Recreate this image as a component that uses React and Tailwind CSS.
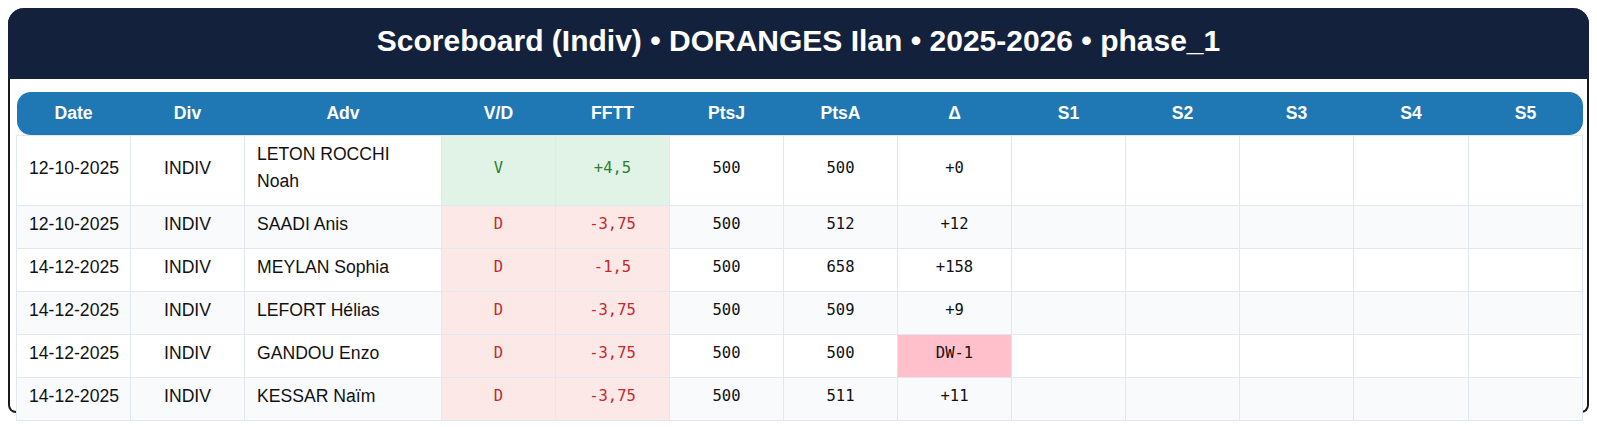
import React from 'react'

const rows = [
  { date: '12-10-2025', div: 'INDIV', adv: 'LETON ROCCHI Noah', vd: 'V', fftt: '+4,5', ptsJ: '500', ptsA: '500', delta: '+0' },
  { date: '12-10-2025', div: 'INDIV', adv: 'SAADI Anis', vd: 'D', fftt: '-3,75', ptsJ: '500', ptsA: '512', delta: '+12' },
  { date: '14-12-2025', div: 'INDIV', adv: 'MEYLAN Sophia', vd: 'D', fftt: '-1,5', ptsJ: '500', ptsA: '658', delta: '+158' },
  { date: '14-12-2025', div: 'INDIV', adv: 'LEFORT Hélias', vd: 'D', fftt: '-3,75', ptsJ: '500', ptsA: '509', delta: '+9' },
  { date: '14-12-2025', div: 'INDIV', adv: 'GANDOU Enzo', vd: 'D', fftt: '-3,75', ptsJ: '500', ptsA: '500', delta: 'DW-1' },
  { date: '14-12-2025', div: 'INDIV', adv: 'KESSAR Naïm', vd: 'D', fftt: '-3,75', ptsJ: '500', ptsA: '511', delta: '+11' },
]

const headers = ['Date', 'Div', 'Adv', 'V/D', 'FFTT', 'PtsJ', 'PtsA', 'Δ', 'S1', 'S2', 'S3', 'S4', 'S5']

function Scoreboard() {
  const cell = 'border border-[#e2e8f0] px-3 pt-[5.5px] pb-[9.5px] leading-[27px]'
  const mono = 'font-["DejaVu_Sans_Mono",monospace] text-[15.5px]'

  return (
    <div className='min-h-screen bg-white font-["Liberation_Sans",Arial,sans-serif] text-[17.6px] text-[#111]'>
      <div className="mx-2 mt-2 h-[405px] rounded-t-[16px] rounded-b-[8px] border-x-2 border-b-2 border-[#1a1a1a]">
        {/* Title bar */}
        <div className="-mx-[2px] flex h-[71px] items-center justify-center rounded-t-[16px] bg-[#14213d] pb-[6px]">
          <h1 className="text-[30px] font-bold text-white">
            Scoreboard (Indiv) • DORANGES Ilan • 2025-2026 • phase_1
          </h1>
        </div>

        {/* Table */}
        <div className="px-[6px] pt-[13px]">
          <table className="w-[1566px] table-fixed border-collapse">
            <colgroup>
              <col className="w-[114px]" />
              <col className="w-[114px]" />
              <col className="w-[197px]" />
              <col className="w-[114px]" />
              <col className="w-[114px]" />
              <col className="w-[114px]" />
              <col className="w-[114px]" />
              <col className="w-[114px]" />
              <col className="w-[114px]" />
              <col className="w-[114px]" />
              <col className="w-[114px]" />
              <col className="w-[115px]" />
              <col className="w-[114px]" />
            </colgroup>
            <thead>
              <tr className="bg-[#1f77b4] text-white">
                {headers.map((h, i) => (
                  <th
                    key={h}
                    className={
                      'h-[43px] p-0 text-center font-bold ' +
                      (i === 0 ? 'rounded-l-[14px] ' : '') +
                      (i === headers.length - 1 ? 'rounded-r-[14px]' : '')
                    }
                  >
                    {h}
                  </th>
                ))}
              </tr>
            </thead>
            <tbody>
              {rows.map((r, idx) => {
                const win = r.vd === 'V'
                const result = win ? 'bg-[#e1f3e6] text-[#2e7d32]' : 'bg-[#fde8e8] text-[#c62828]'
                return (
                  <tr key={idx} className={idx % 2 === 1 ? 'bg-[#f8fafc]' : 'bg-white'}>
                    <td className={cell + ' whitespace-nowrap text-left'}>{r.date}</td>
                    <td className={cell + ' text-center'}>{r.div}</td>
                    <td className={cell + ' text-left'}>{r.adv}</td>
                    <td className={cell + ' text-center ' + mono + ' ' + result}>{r.vd}</td>
                    <td className={cell + ' text-center ' + mono + ' ' + result}>{r.fftt}</td>
                    <td className={cell + ' text-center ' + mono}>{r.ptsJ}</td>
                    <td className={cell + ' text-center ' + mono}>{r.ptsA}</td>
                    <td className={cell + ' text-center ' + mono + (r.delta === 'DW-1' ? ' bg-[#ffc0cb]' : '')}>
                      {r.delta}
                    </td>
                    <td className={cell}></td>
                    <td className={cell}></td>
                    <td className={cell}></td>
                    <td className={cell}></td>
                    <td className={cell}></td>
                  </tr>
                )
              })}
            </tbody>
          </table>
        </div>
      </div>
    </div>
  )
}

export default function App() {
  return <Scoreboard />
}
